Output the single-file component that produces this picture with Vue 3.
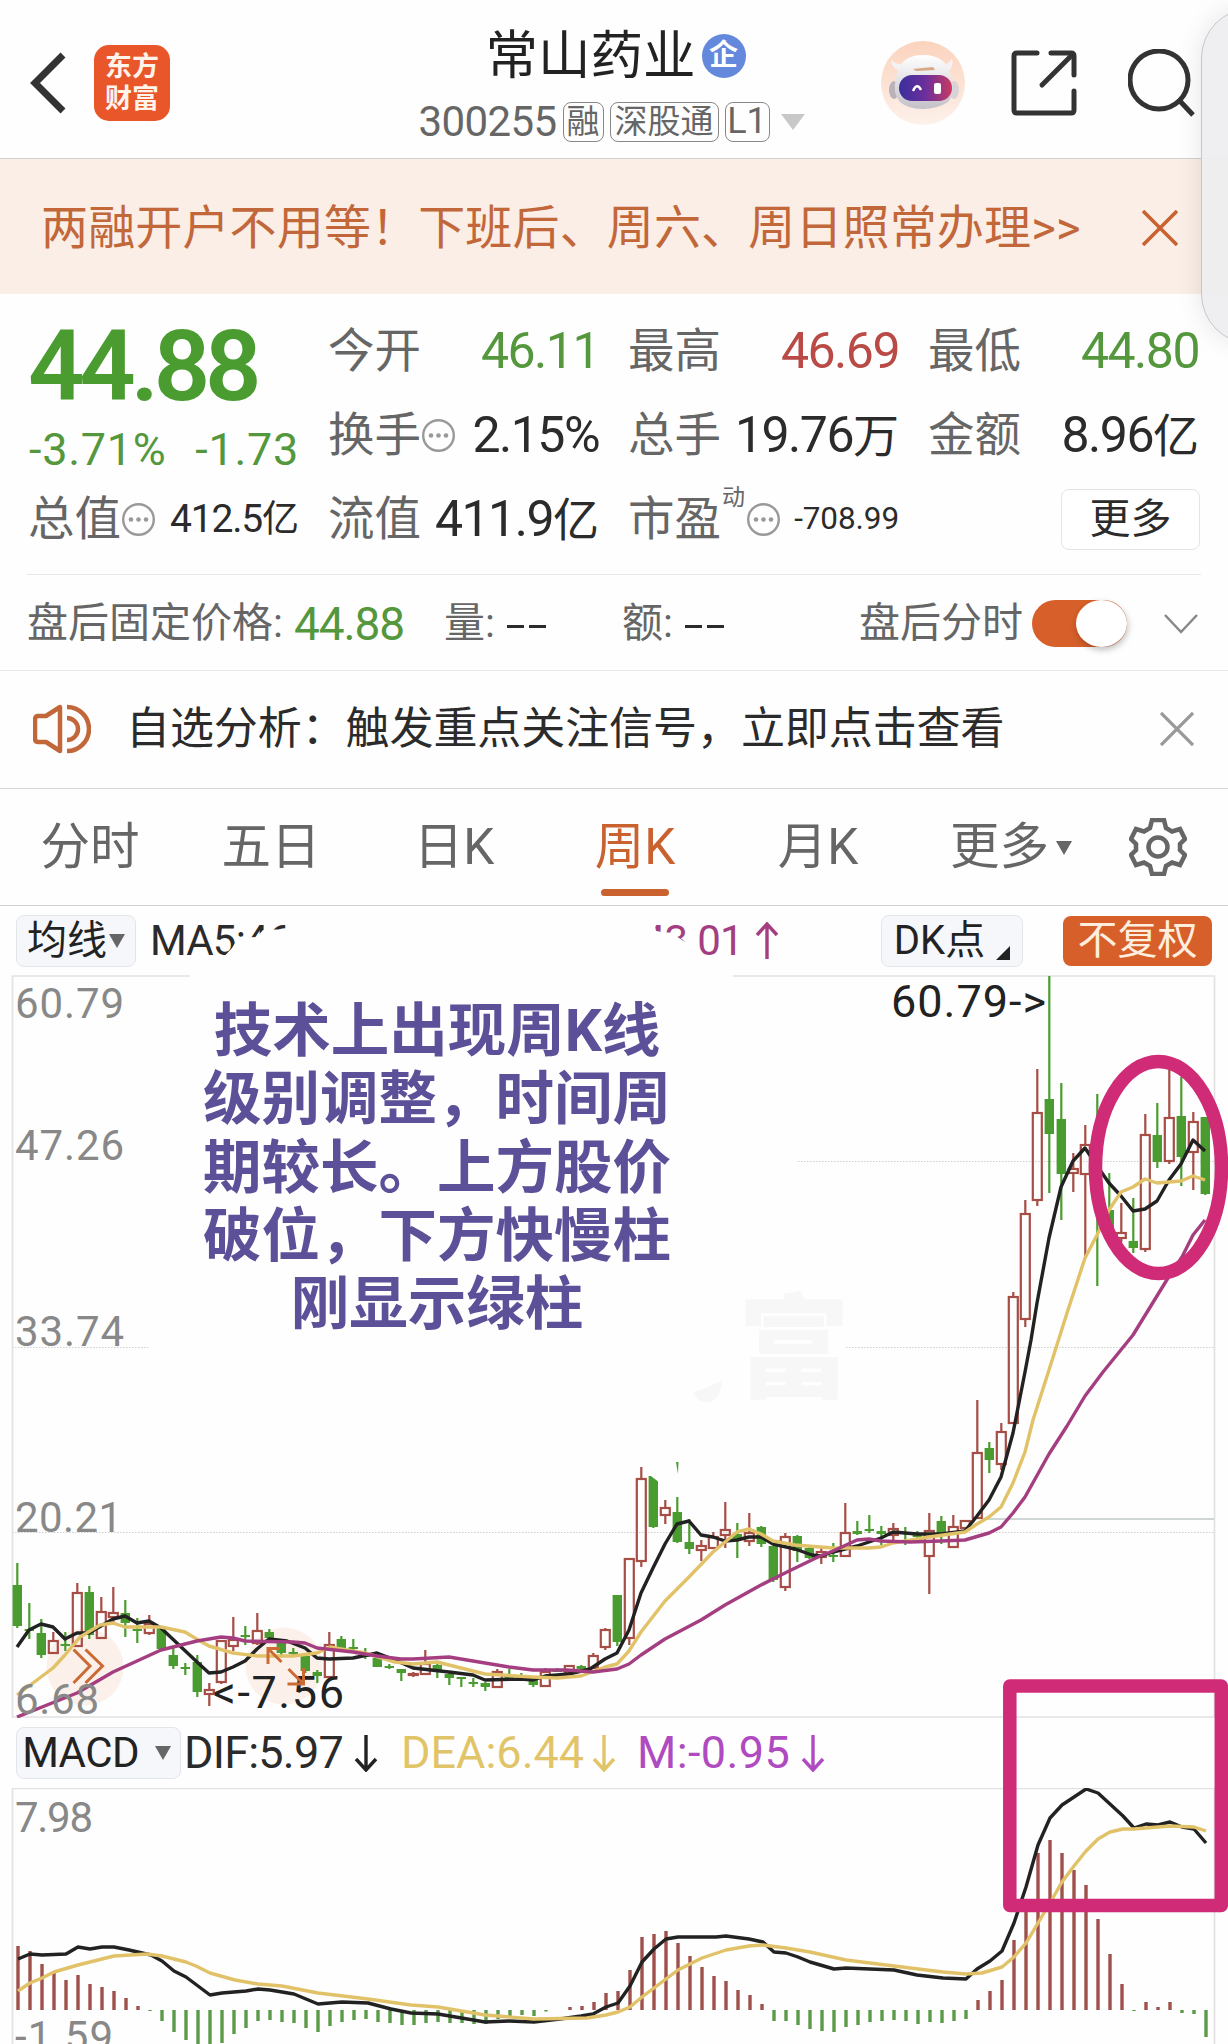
<template>
  <div class="page">
    <header class="header">
      <svg class="back" viewBox="0 0 36 62">
        <path d="M33 3 L5 31 L33 59" />
      </svg>
      <div class="logo"><span>东方</span><span>财富</span></div>
      <div class="stock">
        <div class="stock-name">
          <h1>常山药业</h1>
          <span class="badge">企</span>
        </div>
        <div class="stock-code">
          <span class="code">300255</span>
          <span class="tag">融</span>
          <span class="tag wide">深股通</span>
          <span class="tag l1">L1</span>
          <i class="tri pale"></i>
        </div>
      </div>
      <div class="actions">
        <svg class="robot" viewBox="0 0 84 84">
          <defs>
            <linearGradient id="robotBg" x1="0" y1="0" x2="0" y2="1">
              <stop offset="0" stop-color="#fbd3bd" />
              <stop offset="1" stop-color="#fdf1ea" />
            </linearGradient>
            <linearGradient id="visor" x1="0" y1="0" x2="1" y2="0">
              <stop offset="0" stop-color="#3a2f9e" />
              <stop offset="0.5" stop-color="#6c2f9c" />
              <stop offset="1" stop-color="#c93a62" />
            </linearGradient>
            <linearGradient id="shell" x1="0" y1="0" x2="0" y2="1">
              <stop offset="0" stop-color="#ffffff" />
              <stop offset="1" stop-color="#c4c0c8" />
            </linearGradient>
          </defs>
          <circle cx="42" cy="42" r="42" fill="url(#robotBg)" />
          <path d="M10 18 Q10 27 18 29 L22 23 Q14 24 10 18 Z" fill="#f6f2f3" />
          <path d="M71 17 Q73 27 66 31 L61 24 Q68 24 71 17 Z" fill="#f6f2f3" />
          <ellipse cx="13" cy="49" rx="5" ry="9" fill="#b9b2b8" />
          <ellipse cx="73" cy="49" rx="5" ry="9" fill="#d9d2d6" />
          <path d="M15 37 Q18 14 42 14 Q67 14 70 37 Q75 52 67 61 Q56 68 42 68 Q27 68 19 61 Q11 52 15 37 Z" fill="url(#shell)" />
          <path d="M32 28 L52 26 L54 29 L35 30 Z" fill="#d7a784" />
          <rect x="18" y="34" width="53" height="26" rx="13" fill="url(#visor)" />
          <path d="M32 50 Q36 41 40 49" fill="none" stroke="#fff" stroke-width="2.5" />
          <rect x="53" y="42" width="7" height="11" rx="2" fill="#fff" />
        </svg>
        <svg class="share" viewBox="0 0 66 66">
          <path d="M26 3 H6 Q3 3 3 6 V60 Q3 63 6 63 H60 Q63 63 63 60 V41" />
          <path d="M40 3 H60 Q63 3 63 6 V25" />
          <path d="M61 5 L31 35" />
        </svg>
        <svg class="search" viewBox="0 0 68 68">
          <circle cx="31" cy="31" r="29" />
          <path d="M51 51 L65 66" />
        </svg>
      </div>
    </header>

    <div class="banner">
      <span>两融开户不用等！下班后、周六、周日照常办理&gt;&gt;</span>
      <svg class="close" viewBox="0 0 36 36"><path d="M1 1 L35 35 M35 1 L1 35" /></svg>
    </div>

    <section class="quote">
      <div class="price-box">
        <div class="price">44.88</div>
        <div class="change"><span>-3.71%</span><span>-1.73</span></div>
      </div>
      <div
        v-for="item in quotes"
        :key="item.label"
        class="cell"
      >
        <span class="label">{{ item.label }}</span>
        <sup v-if="item.sup">{{ item.sup }}</sup>
        <svg v-if="item.info" class="info" viewBox="0 0 33 33">
          <circle cx="16.5" cy="16.5" r="15.3" />
          <circle v-for="x in [9, 16.5, 24]" :key="x" class="dot" :cx="x" cy="16.5" r="2.3" />
        </svg>
        <span class="value" :class="[item.color, item.size]">{{ item.value }}<em v-if="item.unit">{{ item.unit }}</em></span>
      </div>
      <div class="cell more-cell"><button class="more">更多</button></div>
    </section>

    <section class="after">
      <span>盘后固定价格:</span>
      <b class="after-price">44.88</b>
      <span class="volume">量:</span><i class="dashes"></i>
      <span class="amount">额:</span><i class="dashes"></i>
      <span class="after-time">盘后分时</span>
      <span class="switch"><i></i></span>
      <svg class="down" viewBox="0 0 36 22"><path d="M2 2 L18 19 L34 2" /></svg>
    </section>

    <section class="notice">
      <svg class="speaker" viewBox="0 0 58 50">
        <path d="M27 3 V47 L13 38 H5 Q2 38 2 34 V16 Q2 12 5 12 H13 Z" />
        <path d="M34 14 A11 11 0 0 1 34 36" />
        <path d="M34 3 A22 22 0 0 1 34 47" />
      </svg>
      <span>自选分析：触发重点关注信号，立即点击查看</span>
      <svg class="close grey" viewBox="0 0 36 36"><path d="M1 1 L35 35 M35 1 L1 35" /></svg>
    </section>

    <nav class="tabs">
      <a v-for="tab in tabs" :key="tab" :class="{ active: tab === current }" @click="current = tab">{{ tab }}</a>
      <a class="tab-more">更多<i class="tri"></i></a>
      <svg class="gear" viewBox="0 0 58 58">
        <path d="M23 2 H35 L37 10 L43 13.500 L51 11 L56 21 L51 26 V32 L56 37 L51 47 L43 44.500 L37 48 L35 56 H23 L21 48 L15 44.500 L7 47 L2 37 L7 32 V26 L2 21 L7 11 L15 13.500 L21 10 Z" />
        <circle cx="29" cy="29" r="9.500" />
      </svg>
    </nav>

    <section class="stage">
      <div class="toolbar">
        <button class="tool line-tool">均线<i class="tri"></i></button>
        <span class="ma5">MA5:46</span>
        <span class="ma20">43.01</span>
        <svg class="arrow up" viewBox="0 0 24 38"><path d="M12 37 V2 M2 13 L12 2 L22 13" /></svg>
        <button class="tool dk">DK点<i class="corner"></i></button>
        <button class="tool orange">不复权</button>
      </div>

      <svg class="kline" viewBox="0 975 1228 743">
        <g class="frame">
          <path d="M12.500 1718 V976 H190 M733 976 H1214.500 V1718" />
          <path d="M12.500 1717 H1214.500" />
        </g>
        <path class="grid" d="M798 1161.500 H1214 M12 1347.500 H148 M846 1347.500 H1214 M12 1532.500 H1214" />
        <path class="cost" d="M988 1519 H1214" />
        <circle class="float" cx="85" cy="1667" r="38.500" />
        <circle class="float" cx="284" cy="1666" r="38.500" />
        <g v-for="c in candles" :key="c.x" :class="c.up ? 'rise' : 'fall'">
          <path :d="c.wick" />
          <rect :x="c.x - c.w / 2" :y="c.top" :width="c.w" :height="c.h" />
        </g>
        <path class="fall-piece" d="M676 1462 H678.500 L678 1474 Z" />
        <polyline class="line black" :points="ma5" />
        <polyline class="line yellow" :points="ma10" />
        <polyline class="line magenta" :points="ma20" />
        <g class="axis">
          <text x="15" y="1018" textLength="109">60.79</text>
          <text x="15" y="1160" textLength="109">47.26</text>
          <text x="15" y="1346" textLength="109">33.74</text>
          <text x="15" y="1532" textLength="107">20.21</text>
          <text x="15" y="1714" textLength="84">6.68</text>
        </g>
        <g class="mark">
          <text x="891" y="1017" textLength="155">60.79-></text>
          <text x="213" y="1708" textLength="131">&lt;-7.56</text>
        </g>
        <path class="float-icon" d="M73.500 1649.500 L90 1666 L73.500 1683 M85.500 1649.500 L102.500 1666 L85.500 1683" />
        <path class="float-icon" d="M268 1664 V1648.500 H280 M268 1648.500 L281.500 1662 M303.500 1668 V1684 H287.500 M288.500 1669 L303.500 1684" />
      </svg>

      <div class="macd-bar">
        <button class="tool macd-tool">MACD<i class="tri"></i></button>
        <span class="dif">DIF:5.97</span>
        <svg class="arrow" viewBox="0 0 24 38"><path d="M12 1 V36 M2 25 L12 36 L22 25" /></svg>
        <span class="dea">DEA:6.44</span>
        <svg class="arrow gold" viewBox="0 0 24 38"><path d="M12 1 V36 M2 25 L12 36 L22 25" /></svg>
        <span class="m">M:-0.95</span>
        <svg class="arrow violet" viewBox="0 0 24 38"><path d="M12 1 V36 M2 25 L12 36 L22 25" /></svg>
      </div>

      <svg class="macd" viewBox="0 1788 1228 256">
        <path class="frame" d="M12.500 2044 V1788.500 H1214.500 V2044" />
        <g class="axis">
          <text x="15" y="1832" textLength="78">7.98</text>
          <text x="15" y="2051" textLength="98">-1.59</text>
        </g>
        <path v-for="b in bars" :key="b.x" :class="b.v > 0 ? 'bar-up' : 'bar-down'" :d="`M${b.x} 2010 V${2010 - b.v}`" />
        <polyline class="line black" :points="dif" />
        <polyline class="line yellow" :points="dea" />
      </svg>

      <!-- hand drawn notes over the charts -->
      <svg class="notes" viewBox="0 906 1228 1138">
        <path class="erase" d="M219 962 L232 948 L238 938 L257 937 L263 930 L290 929 L320 920 L654 920 L656 931 L662 932 L676 936 L688 944 L695 948 L697 962 Z" />
        <path class="erase" d="M647 1473 L660 1483 V1470 H647 Z" />
        <text class="ghost" x="738" y="1389">富</text>
        <path class="ghost" d="M693 1392 Q704 1390 722 1380 Q721 1402 706 1402 Q696 1402 693 1392 Z" />
        <text v-for="(line, i) in remark" :key="i" class="remark" x="437" :y="1051 + i * 68.3">{{ line }}</text>
        <ellipse class="pen" cx="1158.500" cy="1167.500" rx="63" ry="106" />
        <rect class="pen" x="1009.800" y="1686" width="211.500" height="219.500" />
      </svg>
    </section>

    <div class="side-panel"></div>
  </div>
</template>

<script setup>
import { ref } from "vue";

const quotes = [
  { label: "今开", value: "46.11", color: "green" },
  { label: "最高", value: "46.69", color: "red" },
  { label: "最低", value: "44.80", color: "green" },
  { label: "换手", info: true, value: "2.15%" },
  { label: "总手", value: "19.76", unit: "万" },
  { label: "金额", value: "8.96", unit: "亿" },
  { label: "总值", info: true, value: "412.5", unit: "亿", size: "mid" },
  { label: "流值", value: "411.9", unit: "亿" },
  { label: "市盈", sup: "动", info: true, value: "-708.99", size: "small" },
];

const tabs = ["分时", "五日", "日K", "周K", "月K"];
const current = ref("周K");

const remark = ["技术上出现周K线", "级别调整，时间周", "期较长。上方股价", "破位，下方快慢柱", "刚显示绿柱"];

// [up, high, body top, body bottom, low], one per week
const weeks = [
  [0, 1563, 1585, 1626, 1628], [0, 1603, 1629, 1631, 1639], [0, 1619, 1633, 1655, 1658],
  [1, 1632, 1641, 1653, 1654], [0, 1632, 1644, 1646, 1651], [1, 1583, 1593, 1646, 1647],
  [0, 1586, 1592, 1635, 1639], [1, 1597, 1612, 1638, 1638], [1, 1587, 1613, 1617, 1622],
  [0, 1600, 1613, 1623, 1637], [0, 1618, 1629, 1631, 1643], [1, 1615, 1624, 1633, 1635],
  [0, 1627, 1628, 1649, 1650], [0, 1648, 1655, 1666, 1669], [0, 1663, 1667, 1669, 1675],
  [0, 1655, 1662, 1692, 1697], [1, 1683, 1690, 1694, 1706], [1, 1640, 1641, 1682, 1684],
  [1, 1617, 1640, 1646, 1651], [0, 1626, 1635, 1637, 1645], [1, 1613, 1631, 1643, 1645],
  [0, 1629, 1632, 1638, 1643], [0, 1640, 1643, 1653, 1655], [0, 1648, 1652, 1654, 1657],
  [0, 1655, 1656, 1671, 1673], [0, 1670, 1672, 1676, 1683], [1, 1632, 1645, 1677, 1678],
  [0, 1636, 1639, 1648, 1650], [0, 1639, 1647, 1649, 1651], [0, 1648, 1655, 1657, 1659],
  [0, 1657, 1658, 1667, 1667], [0, 1664, 1666, 1668, 1669], [0, 1669, 1669, 1673, 1681],
  [1, 1672, 1674, 1675, 1677], [1, 1650, 1664, 1674, 1675], [0, 1663, 1665, 1671, 1678],
  [0, 1672, 1674, 1678, 1685], [0, 1677, 1677, 1679, 1687], [0, 1678, 1682, 1684, 1687],
  [0, 1682, 1683, 1687, 1691], [1, 1669, 1672, 1687, 1688], [0, 1669, 1676, 1678, 1679],
  [0, 1673, 1676, 1678, 1678], [0, 1679, 1680, 1685, 1687], [1, 1668, 1672, 1686, 1687],
  [0, 1668, 1669, 1672, 1672], [1, 1665, 1666, 1672, 1672], [0, 1665, 1666, 1669, 1671],
  [1, 1653, 1656, 1668, 1668], [1, 1628, 1630, 1647, 1650], [0, 1595, 1595, 1642, 1646],
  [1, 1558, 1559, 1638, 1645], [1, 1467, 1479, 1561, 1567], [0, 1476, 1476, 1527, 1528],
  [1, 1500, 1508, 1515, 1524], [0, 1497, 1512, 1542, 1543], [0, 1519, 1542, 1549, 1554],
  [1, 1540, 1546, 1550, 1561], [1, 1532, 1537, 1548, 1548], [1, 1502, 1530, 1535, 1548],
  [0, 1523, 1534, 1540, 1558], [1, 1513, 1533, 1541, 1546], [0, 1526, 1527, 1544, 1547],
  [0, 1546, 1546, 1580, 1582], [1, 1533, 1537, 1587, 1591], [0, 1535, 1536, 1551, 1562],
  [0, 1547, 1548, 1558, 1559], [1, 1547, 1552, 1557, 1564], [0, 1543, 1555, 1557, 1562],
  [1, 1503, 1533, 1556, 1557], [0, 1521, 1531, 1534, 1535], [0, 1515, 1529, 1531, 1533],
  [0, 1526, 1531, 1534, 1545], [1, 1523, 1529, 1535, 1540], [0, 1527, 1532, 1534, 1545],
  [0, 1531, 1535, 1537, 1540], [1, 1513, 1531, 1556, 1594], [0, 1516, 1521, 1535, 1544],
  [1, 1515, 1527, 1547, 1547], [1, 1520, 1521, 1528, 1531], [1, 1400, 1453, 1518, 1518],
  [0, 1442, 1448, 1460, 1473], [1, 1423, 1432, 1464, 1470], [1, 1292, 1297, 1423, 1424],
  [1, 1200, 1214, 1319, 1327], [1, 1069, 1113, 1200, 1206], [0, 976, 1099, 1134, 1193],
  [0, 1083, 1119, 1174, 1220], [1, 1153, 1169, 1173, 1192], [1, 1125, 1145, 1174, 1257],
  [0, 1094, 1160, 1174, 1286], [0, 1173, 1210, 1230, 1232], [1, 1203, 1233, 1238, 1242],
  [0, 1198, 1241, 1248, 1253], [1, 1114, 1135, 1249, 1252], [0, 1103, 1135, 1162, 1168],
  [1, 1067, 1118, 1161, 1164], [0, 1077, 1116, 1157, 1186], [1, 1112, 1122, 1152, 1190],
  [0, 1117, 1117, 1194, 1195],
];

const candles = weeks.map(([up, high, top, bottom, low], i) => {
  const x = 17.3 + i * 12;
  return {
    x,
    up,
    top,
    w: up ? 9 : 9.4,
    h: Math.max(bottom - top, 1),
    wick: `M${x} ${high} V${top} M${x} ${bottom} V${low}`,
  };
});

const histogram = [
  64, 59, 46, 38, 30, 35, 26, 23, 19, 12, 4, -1, -11, -22, -30, -40, -40, -33, -24, -18,
  -11, -10, -12, -13, -18, -22, -16, -12, -10, -9, -12, -13, -15, -15, -13, -12, -13, -13, -14, -14,
  -9, -7, -5, -6, -1.5, 0, 3, 4, 8, 17, 19, 40, 73, 76, 79, 67, 54, 43, 34, 29,
  20, 15, 6, -11, -11, -15, -19, -21, -22, -17, -15, -12, -11, -10, -11, -14, -12, -13, -11, -9,
  10, 19, 30, 70, 103, 157, 170, 157, 140, 125, 91, 56, 26, -1, 8, 3, 8, -3, -4, -27,
];

const bars = histogram.map((v, i) => ({ v, x: 18 + i * 12 }));

const ma5 =
  "17,1647 29,1630 41,1624 53,1627 65,1639 77,1633 89,1633 101,1626 113,1619 125,1616 137,1623 149,1621 161,1628 197,1662 209,1673 221,1672 233,1667 245,1661 257,1649 269,1639 287,1641 305,1648 317,1658 329,1659 353,1658 377,1653 395,1660 413,1668 449,1672 473,1675 485,1680 521,1679 533,1680 545,1676 569,1674 590,1669 605,1659 617,1653 629,1630 641,1593 653,1568 665,1544 677,1524 689,1521 701,1535 713,1537 725,1541 737,1540 749,1537 761,1537 773,1544 795,1549 812,1555 821,1556 833,1552 857,1546 881,1538 893,1532 917,1534 941,1534 965,1531 977,1516 989,1500 1001,1477 1013,1433 1025,1372 1031,1340 1037,1303 1049,1238 1061,1187 1073,1161 1085,1148 1102,1173 1109,1183 1121,1196 1133,1211 1145,1209 1157,1201 1169,1180 1181,1164 1193,1140 1205,1151";
const ma10 =
  "17,1695 53,1668 65,1655 80,1637 100,1625 113,1623 125,1627 149,1627 161,1627 185,1632 200,1641 209,1646 233,1653 257,1656 293,1656 317,1653 330,1647 341,1649 365,1653 395,1662 413,1664 437,1662 449,1665 485,1674 533,1677 557,1678 581,1676 605,1667 617,1664 629,1651 641,1632 665,1601 689,1577 713,1552 725,1542 737,1532 749,1529 761,1534 773,1541 795,1545 833,1548 869,1548 881,1547 893,1543 929,1537 965,1532 977,1524 989,1517 1001,1507 1013,1483 1025,1452 1033,1420 1049,1370 1067,1313 1085,1258 1097,1235 1109,1210 1121,1192 1133,1187 1145,1179 1157,1183 1181,1181 1193,1176 1205,1180";
const ma20 =
  "17,1717 77,1693 113,1672 161,1650 197,1641 221,1637 233,1638 245,1641 293,1642 305,1643 317,1648 353,1652 377,1656 401,1659 413,1659 449,1657 473,1661 509,1667 533,1670 567,1670 593,1672 617,1669 629,1664 641,1655 665,1639 701,1620 725,1605 761,1585 785,1573 820,1556 833,1551 857,1540 869,1539 881,1541 910,1542 941,1541 965,1540 989,1533 1001,1527 1013,1513 1025,1497 1049,1454 1067,1426 1085,1396 1103,1372 1133,1335 1168,1278 1182,1257 1193,1235 1205,1220";
const dif =
  "18,1959 30,1954 42,1955 66,1954 78,1947 90,1949 102,1947 114,1947 129,1950 151,1955 162,1961 174,1971 186,1977 210,1995 222,1993 246,1991 258,1989 270,1990 294,1994 318,2004 342,2002 368,2003 391,2009 411,2013 438,2014 485,2022 509,2021 534,2022 560,2019 581,2016 593,2014 606,2007 618,2003 630,1986 642,1962 654,1949 666,1939 678,1937 716,1937 726,1936 749,1939 763,1942 774,1952 786,1953 798,1957 810,1962 834,1969 846,1968 894,1970 917,1975 943,1978 966,1979 977,1969 990,1961 1002,1951 1014,1923 1026,1887 1038,1845 1050,1818 1062,1805 1086,1789 1098,1793 1123,1816 1134,1828 1146,1824 1158,1825 1170,1822 1182,1827 1194,1829 1206,1843";
const dea =
  "18,1991 30,1983 42,1978 54,1972 78,1965 114,1956 147,1954 162,1956 186,1962 196,1966 210,1973 235,1980 258,1984 282,1986 318,1993 368,1999 411,2005 438,2007 485,2015 534,2019 587,2018 606,2015 618,2012 630,2007 642,1997 654,1988 678,1970 702,1958 726,1950 749,1946 763,1945 786,1948 810,1952 846,1960 894,1966 943,1972 966,1974 982,1973 1002,1967 1014,1957 1026,1943 1038,1923 1050,1903 1062,1882 1074,1866 1086,1851 1098,1839 1110,1832 1123,1829 1134,1829 1170,1826 1194,1827 1206,1831";
</script>

<style>
body {
  margin: 0;
  background: #fefefe;
}
</style>

<style scoped>
.page {
  position: relative;
  width: 1228px;
  height: 2044px;
  overflow: hidden;
  background: #fefefe;
  color: #2b2b2b;
  font-family: Roboto, "Noto Sans CJK SC", sans-serif;
  line-height: 1;
}

.page * {
  box-sizing: border-box;
}

svg {
  display: block;
  flex: none;
}

span,
a,
button {
  white-space: nowrap;
}

i,
em {
  font-style: normal;
}

button {
  font-family: inherit;
  line-height: 1;
  padding: 0;
}

.tri {
  display: block;
  border: 8.5px solid transparent;
  border-top: 14px solid #666;
  border-bottom: 0;
}

/* header */
.header {
  display: flex;
  align-items: center;
  height: 159px;
  padding: 8px 32px 0 30px;
  border-bottom: 1px solid #cfd2d3;
}

.back {
  width: 36px;
  height: 62px;
  fill: none;
  stroke: #333;
  stroke-width: 7;
}

.logo {
  display: flex;
  flex-direction: column;
  justify-content: center;
  align-items: center;
  gap: 5px;
  width: 76px;
  height: 76px;
  margin-left: 28px;
  border-radius: 15px;
  background: #e8562a;
  color: #fff3ea;
  font-size: 27px;
  font-weight: 700;
}

.stock {
  align-self: flex-start;
  width: 405px;
  margin: 16px 0 0 239px;
}

.stock-name,
.stock-code {
  display: flex;
  align-items: center;
  justify-content: center;
}

.stock-name {
  height: 64px;
  padding-left: 8px;
}

h1 {
  margin: 0;
  font-size: 52.5px;
  font-weight: 400;
  color: #222;
}

.badge {
  width: 44px;
  height: 44px;
  margin-left: 6px;
  border-radius: 50%;
  background: #6488dc;
  color: #fff;
  font-size: 29px;
  font-weight: 700;
  line-height: 42px;
  text-align: center;
}

.stock-code {
  height: 40px;
  margin-top: 14px;
  color: #666;
  gap: 6px;
}

.code {
  font-size: 42px;
  letter-spacing: -0.6px;
}

.tag {
  width: 41px;
  height: 40px;
  border: 1.5px solid #888;
  border-radius: 8px;
  font-size: 33px;
  line-height: 37px;
  text-align: center;
}

.tag.wide {
  width: 109px;
}

.tag.l1 {
  width: 45px;
  font-size: 36px;
}

.tri.pale {
  margin-left: 5px;
  border-width: 16px 12px 0;
  border-top-color: #c8c8c8;
}

.actions {
  display: flex;
  align-items: center;
  margin-left: auto;
}

.robot {
  width: 84px;
  height: 84px;
}

.share {
  width: 66px;
  height: 66px;
  margin-left: 46px;
  fill: none;
  stroke: #333;
  stroke-width: 5;
  stroke-linecap: round;
}

.search {
  width: 68px;
  height: 68px;
  margin-left: 51px;
  fill: none;
  stroke: #333;
  stroke-width: 5;
}

/* banner */
.banner {
  display: flex;
  align-items: center;
  justify-content: space-between;
  height: 135px;
  padding: 2px 50px 0 41px;
  background: #faeee6;
  color: #c2673a;
  font-size: 47px;
  letter-spacing: 0.15px;
}

.close {
  width: 36px;
  height: 36px;
  fill: none;
  stroke: #c9622f;
  stroke-width: 3.5;
}

/* quote */
.quote {
  display: grid;
  grid-template-columns: repeat(4, 1fr);
  grid-template-rows: repeat(3, 84px);
  column-gap: 30px;
  height: 281px;
  margin: 0 27px;
  padding: 15px 2px 0;
  border-bottom: 1px solid #e8e8e8;
}

.price-box {
  grid-row: span 2;
  color: #4b9c30;
}

.price {
  height: 114px;
  margin-left: -1px;
  font-size: 99px;
  font-weight: 600;
  line-height: 114px;
  letter-spacing: -5.2px;
}

.change {
  display: flex;
  justify-content: space-between;
  font-size: 45px;
  line-height: 54px;
  letter-spacing: 0.7px;
  color: #54973d;
}

.cell {
  display: flex;
  align-items: center;
}

.label {
  margin-left: -1px;
  font-size: 46.5px;
  color: #666;
}

.value {
  margin-left: auto;
  color: #2b2b2b;
  font-size: 50px;
  letter-spacing: -1.5px;
}

.value em {
  font-size: 46px;
  letter-spacing: 0;
}

.value.mid {
  font-size: 39px;
  letter-spacing: -1.2px;
}

.value.mid em {
  font-size: 37px;
}

.value.small {
  font-size: 31.5px;
  letter-spacing: -0.1px;
}

.value.green {
  color: #54973d;
}

.value.red {
  color: #b94a45;
}

.info {
  width: 33px;
  height: 33px;
  margin-left: 1px;
  fill: none;
  stroke: #999;
  stroke-width: 2.4;
}

.info .dot {
  fill: #999;
  stroke: none;
}

sup {
  align-self: flex-start;
  margin: 9px 1px 0 1px;
  font-size: 23px;
  line-height: 1;
  color: #666;
}

.more-cell {
  justify-content: flex-end;
}

.more {
  width: 139px;
  height: 61px;
  margin-right: -1px;
  border: 1.5px solid #e4e4e4;
  border-radius: 8px;
  background: #fff;
  color: #2b2b2b;
  font-size: 41px;
}

/* after hours */
.after {
  display: flex;
  align-items: center;
  height: 96px;
  padding: 2px 29px 0 27px;
  border-bottom: 1px solid #e8e8e8;
  color: #666;
  font-size: 41px;
}

.after-price {
  width: 109px;
  margin-left: 11px;
  color: #54973d;
  font-size: 46px;
  font-weight: 400;
  letter-spacing: -1.1px;
}

.volume,
.amount {
  width: 50px;
  margin-left: 41px;
}

.amount {
  margin-left: 76px;
}

.dashes {
  width: 39px;
  height: 3px;
  margin: 6px 0 0 13px;
  background: linear-gradient(90deg, #2b2b2b 17px, transparent 17px 22px, #2b2b2b 22px);
}

.after-time {
  margin-left: auto;
}

.switch {
  display: flex;
  justify-content: flex-end;
  width: 95px;
  height: 47px;
  margin-left: 9px;
  border-radius: 24px;
  background: #d65f2a;
}

.switch i {
  width: 51px;
  height: 47px;
  border-radius: 50%;
  background: #fff;
  box-shadow: 1px 3px 6px rgba(0, 0, 0, 0.25);
}

.down {
  width: 36px;
  height: 22px;
  margin-left: 36px;
  fill: none;
  stroke: #888;
  stroke-width: 2.5;
}

/* notice */
.notice {
  display: flex;
  align-items: center;
  height: 118px;
  padding: 0 34px 2px 33px;
  border-bottom: 1px solid #d4d8d8;
  font-size: 44px;
}

.notice span {
  margin-left: 35px;
  letter-spacing: -0.08px;
}

.speaker {
  width: 58px;
  height: 50px;
  fill: none;
  stroke: #c2673a;
  stroke-width: 4.5;
  stroke-linejoin: round;
}

.close.grey {
  width: 34px;
  height: 34px;
  margin-left: auto;
  stroke: #999;
}

/* tabs */
.tabs {
  display: flex;
  align-items: center;
  height: 117px;
  padding-left: 40px;
  border-bottom: 1px solid #cfd3d3;
  color: #666;
  font-size: 49.5px;
}

.tabs a {
  display: flex;
  align-items: center;
  justify-content: center;
  height: 116px;
  width: 100px;
  padding-top: 2px;
  margin-right: 81px;
}

.tabs a:nth-child(2) {
  margin-right: 83px;
}

.tabs a:nth-child(4) {
  margin-right: 83px;
}

.tabs a.active {
  color: #c9622f;
  position: relative;
}

.tabs a.active::after {
  content: "";
  position: absolute;
  left: 16px;
  bottom: 9px;
  width: 68px;
  height: 7px;
  border-radius: 4px;
  background: #c9622f;
}

.tabs a.tab-more {
  width: 124px;
  margin: 0 56px 0 0;
}

.tab-more .tri {
  margin-left: 7px;
}

.gear {
  width: 58px;
  height: 58px;
  fill: none;
  stroke: #666;
  stroke-width: 4.5;
}

/* chart area */
.stage {
  position: relative;
}

.toolbar,
.macd-bar {
  display: flex;
  align-items: center;
  height: 69px;
  padding-left: 16px;
}

.tool {
  display: flex;
  align-items: center;
  justify-content: center;
  height: 52px;
  border: 1.5px solid #e3e6e8;
  border-radius: 8px;
  background: #f6f7fa;
  color: #222;
  font-size: 40px;
}

.line-tool {
  width: 120px;
}

.line-tool .tri {
  margin-left: 2px;
}

.ma5 {
  width: 145px;
  margin-left: 14px;
  font-size: 42px;
  letter-spacing: -0.8px;
}

.ma20 {
  width: 105px;
  margin-left: 347px;
  font-size: 42px;
  color: #a43e80;
  letter-spacing: -1px;
}

.arrow {
  width: 24px;
  height: 38px;
  fill: none;
  stroke: #222;
  stroke-width: 3.4;
}

.arrow.up {
  margin-left: 8px;
  stroke: #a43e80;
}

.dk {
  width: 142px;
  margin-left: 102px;
}

.corner {
  align-self: flex-end;
  margin: 0 0 6px 11px;
  border-left: 14px solid transparent;
  border-bottom: 14px solid #222;
}

.orange {
  width: 149px;
  height: 50px;
  margin-left: 40px;
  border: 0;
  background: #d65f2a;
  color: #ffeede;
}

.kline {
  width: 1228px;
  height: 743px;
}

.macd {
  width: 1228px;
  height: 256px;
}

.frame,
.frame path {
  fill: none;
  stroke: #e2e2e2;
  stroke-width: 1.7;
}

.grid {
  fill: none;
  stroke: #cfcfcf;
  stroke-dasharray: 1.5 1.5;
}

.cost {
  stroke: #cfd5d4;
  stroke-width: 2;
}

.axis text {
  font-size: 42px;
  fill: #888;
}

.mark text {
  font-size: 45px;
  fill: #222;
}

.float {
  fill: #fbf0ea;
}

.float-icon {
  fill: none;
  stroke: #cc6a35;
  stroke-width: 3;
}

.rise path,
.rise rect {
  fill: none;
  stroke: #a64d45;
  stroke-width: 2.2;
}

.fall path {
  stroke: #4b9c30;
  stroke-width: 2.2;
}

.fall rect,
.fall-piece {
  fill: #4b9c30;
}

.line {
  fill: none;
  stroke-width: 3.4;
  stroke-linejoin: round;
}

.black {
  stroke: #222;
}

.yellow {
  stroke: #e2c268;
}

.magenta {
  stroke: #a43e80;
}

.bar-up {
  stroke: #a0504a;
  stroke-width: 3.4;
}

.bar-down {
  stroke: #5a9a48;
  stroke-width: 3.4;
}

.macd-bar {
  height: 70px;
  padding-bottom: 1px;
  font-size: 45px;
}

.macd-tool {
  width: 165px;
  padding-right: 4px;
  font-size: 42px;
  letter-spacing: -0.6px;
}

.macd-tool .tri {
  margin-left: 16px;
}

.dif {
  width: 159px;
  margin-left: 3px;
  letter-spacing: -0.8px;
}

.macd-bar .arrow {
  margin-left: 11px;
}

.dea {
  width: 181px;
  margin-left: 23px;
  color: #e2c468;
}

.macd-bar .arrow.gold {
  margin-left: 10px;
  stroke: #e2c468;
}

.m {
  width: 153px;
  margin-left: 21px;
  color: #b04ac0;
  letter-spacing: 0.4px;
}

.macd-bar .arrow.violet {
  stroke: #b04ac0;
}

.notes {
  position: absolute;
  left: 0;
  top: 0;
  width: 1228px;
  height: 1138px;
}

.erase {
  fill: #fefefe;
}

.ghost {
  fill: #f7f7f7;
  font-size: 112px;
  font-weight: 900;
}

.remark {
  fill: #5c5098;
  font-size: 58.5px;
  font-weight: 700;
  text-anchor: middle;
}

.pen {
  fill: none;
  stroke: #cf2b77;
  stroke-width: 13.5;
  stroke-linejoin: round;
}

.side-panel {
  position: absolute;
  left: 1201px;
  top: 8px;
  width: 120px;
  height: 336px;
  border: 1.5px solid #c6c6c8;
  border-radius: 50px;
  background: rgba(238, 238, 240, 0.92);
  box-shadow: 0 0 26px rgba(0, 0, 0, 0.1);
}
</style>
